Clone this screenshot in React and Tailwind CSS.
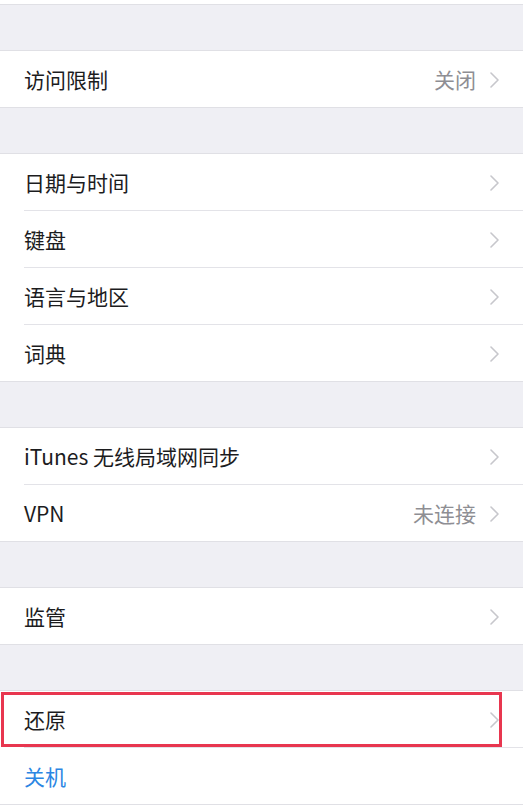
const font = {
  fontFamily: '"Noto Sans CJK SC", "Liberation Sans", sans-serif',
};

const Chevron = () => (
  <svg width="9" height="16" viewBox="0 0 9 16" className="ml-[14px]">
    <polyline
      points="1,1 8,8 1,15"
      fill="none"
      stroke="#c7c7cc"
      strokeWidth="1.6"
      strokeLinecap="round"
      strokeLinejoin="round"
    />
  </svg>
);

const Row = ({ label, value, last, blue, chevron = true, highlight }) => (
  <div className="relative bg-white">
    <div className="flex h-[56px] items-center pl-6 pr-[24px] pt-[2px]">
      <span className={`flex-1 text-[21px] ${blue ? "text-[#2b86e3]" : "text-[#1c1c1e]"}`}>
        {label}
      </span>
      {value && <span className="text-[21px] text-[#8e8e93]">{value}</span>}
      {chevron && <Chevron />}
    </div>
    {!last && <div className="ml-6 h-px bg-[#e3e3e8]" />}
    {highlight && (
      <div className="absolute left-px top-[1px] h-[55px] w-[501px] border-[3px] border-[#e8364f]" />
    )}
  </div>
);

const Group = ({ children }) => (
  <div className="border-y border-[#e0e0e5] bg-white">{children}</div>
);

const Gap = () => <div className="h-[45px] bg-[#efeff4]" />;

export default function App() {
  return (
    <div className="h-[805px] w-[523px] overflow-hidden bg-[#efeff4]" style={font}>
      <div className="h-[5px] bg-white border-b border-[#e0e0e5]" />
      <div className="h-[45px] bg-[#efeff4]" />
      <Group>
        <Row label="访问限制" value="关闭" last />
      </Group>
      <Gap />
      <Group>
        <Row label="日期与时间" />
        <Row label="键盘" />
        <Row label="语言与地区" />
        <Row label="词典" last />
      </Group>
      <Gap />
      <Group>
        <Row label="iTunes 无线局域网同步" />
        <Row label="VPN" value="未连接" last />
      </Group>
      <Gap />
      <Group>
        <Row label="监管" last />
      </Group>
      <Gap />
      <Group>
        <Row label="还原" highlight />
        <Row label="关机" blue chevron={false} last />
      </Group>
    </div>
  );
}
